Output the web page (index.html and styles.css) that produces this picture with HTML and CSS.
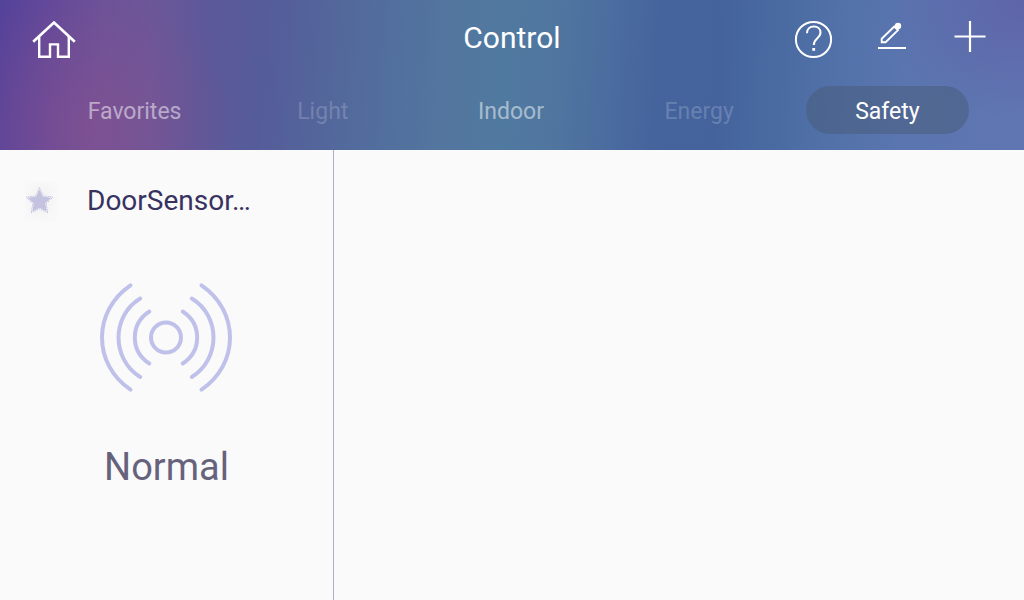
FILE: index.html
```
<!DOCTYPE html>
<html lang="en">
<head>
<meta charset="utf-8">
<meta name="viewport" content="width=device-width, initial-scale=1">
<title>Control</title>
<link rel="stylesheet" href="styles.css">
</head>
<body>
<header class="header">
  <div class="topbar">
    <button class="icon-button" type="button" aria-label="Home">
      <svg width="48" height="48" viewBox="0 0 48 48" fill="none" stroke="#fff" stroke-width="2.400">
        <path d="M3.200 26.800 24 7.500l20.800 19.300" stroke-width="2.700"/>
        <path d="M9.200 22v19.800H20V29.400h8v12.400h10.800V22"/>
      </svg>
    </button>
    <h1 class="title">Control</h1>
    <div class="actions">
      <button class="icon-button" type="button" aria-label="Help">
        <svg width="48" height="48" viewBox="0 0 48 48" fill="none" stroke="#fff">
          <circle cx="23.500" cy="24.500" r="17.600" stroke-width="2"/>
          <path d="M17 18.300c0-4.200 2.900-6.800 6.800-6.800 4 0 6.700 2.500 6.700 6.100 0 2.800-1.400 4.200-3.400 6-2.200 2-3.300 3.200-3.300 6.400" stroke-width="2"/>
          <path d="M23.700 33v2.800" stroke-width="2.800"/>
        </svg>
      </button>
      <button class="icon-button" type="button" aria-label="Edit">
        <svg width="48" height="48" viewBox="0 0 48 48" fill="none" stroke="#fff">
          <path d="M10 33h28" stroke-width="2"/>
          <path d="m26.200 11.500 3.800 3.600L17.600 27.300h-3.900v-3.600z" stroke-width="1.900"/>
          <circle cx="30" cy="11" r="3.200" fill="#fff" stroke="none"/>
        </svg>
      </button>
      <button class="icon-button" type="button" aria-label="Add">
        <svg width="48" height="48" viewBox="0 0 48 48" fill="none" stroke="#fff" stroke-width="2.200">
          <path d="M8.500 21.500h31M24 6v31"/>
        </svg>
      </button>
    </div>
  </div>
  <nav class="tabs" aria-label="Categories">
    <button class="tab" type="button">Favorites</button>
    <button class="tab tab-empty" type="button">Light</button>
    <button class="tab" type="button">Indoor</button>
    <button class="tab tab-empty" type="button">Energy</button>
    <button class="tab tab-active" type="button" aria-current="page">Safety</button>
  </nav>
</header>
<main class="devices">
  <section class="device">
    <div class="device-head">
      <button class="favorite" type="button" aria-label="Add to favorites">
        <svg width="32" height="40" viewBox="0 0 32 40">
          <path d="m14.500 6.500 4 8.300 9.400 1.400-6.700 6.600 1.700 9.200-8.400-4.200-8.400 4.200 1.700-9.200-6.700-6.600 9.400-1.400z" fill="#c3c3df" stroke="#fff" stroke-width="1.600"/>
          <path d="m14.500 6.500 4 8.300 9.400 1.400-6.700 6.600 1.700 9.200-8.400-4.200-8.400 4.200 1.700-9.200-6.700-6.600 9.400-1.400z" fill="none" stroke="#bcbcdb" stroke-width="1" stroke-dasharray="1.500 .7"/>
        </svg>
      </button>
      <h2 class="device-name">DoorSensor…</h2>
    </div>
    <svg class="sensor" width="154" height="130" viewBox="0 0 154 130" fill="none" stroke="#bfc1ea" stroke-width="4" stroke-linecap="round" aria-hidden="true">
      <circle cx="76" cy="66.500" r="15"/>
      <path d="M59.300 40.500C40 53 40 80 59.300 92.500M50.200 27.500C21.300 45 21.300 88 50.200 106M40.500 14.300C2.500 40 2.500 93 40.500 118.700"/>
      <path d="M92.700 40.500C112 53 112 80 92.700 92.500M101.800 27.500C130.700 45 130.700 88 101.800 106M111.500 14.300C149.500 40 149.500 93 111.500 118.700"/>
    </svg>
    <p class="status">Normal</p>
  </section>
</main>
</body>
</html>
```
FILE: styles.css
```
* {
  box-sizing: border-box;
}

body {
  display: flex;
  flex-direction: column;
  min-height: 100vh;
  margin: 0;
  background: #fafafa;
  font-family: Roboto, sans-serif;
}

button {
  padding: 0;
  border: 0;
  background: none;
  color: inherit;
  font: inherit;
  cursor: pointer;
}

svg {
  display: block;
}

.header {
  padding-bottom: 16px;
  background:
    radial-gradient(ellipse 14% 100% at 9% 85%, rgb(140 80 140 / 55%), transparent),
    radial-gradient(ellipse 14% 80% at 100% 0%, rgb(94 88 162 / 60%), transparent),
    linear-gradient(94deg, #54429a 0%, #62499a 5%, #6b5299 10%, #6a5799 15%, #5d5899 20%, #555c9a 26%, #53669b 32%, #526f9e 38%, #53769f 44%, #5079a0 49%, #50769f 54%, #4b6d9f 59%, #45649d 64%, #44639d 70%, #4a6ba2 76%, #5372aa 82%, #5a75af 88%, #6076b2 100%);
  color: #fff;
}

.topbar {
  display: grid;
  grid-template-columns: 1fr auto 1fr;
  align-items: center;
  padding: 15px 30px 23px;
}

.icon-button {
  width: 48px;
  height: 48px;
}

.title {
  margin: 0;
  padding-bottom: 2px;
  font-size: 30px;
  font-weight: 400;
  line-height: 40px;
}

.actions {
  display: flex;
  justify-content: flex-end;
  gap: 30px;
}

.tabs {
  display: grid;
  grid-template-columns: repeat(5, 1fr);
  gap: 25px;
  padding: 0 55px 0 53px;
}

.tab {
  height: 48px;
  padding-top: 4px;
  border-radius: 24px;
  color: rgb(255 255 255 / 50%);
  font-size: 23px;
  line-height: 44px;
}

.tab-empty {
  color: rgb(255 255 255 / 20%);
}

.tab-active {
  background: rgb(72 92 124 / 55%);
  color: #fff;
}

.devices {
  display: grid;
  flex: 1;
  grid-template-columns: repeat(auto-fill, minmax(320px, 334px));
}

.device {
  display: flex;
  flex-direction: column;
  align-items: center;
  padding-top: 31px;
  border-right: 1px solid #b0b0be;
}

.device-head {
  display: flex;
  align-items: center;
  align-self: stretch;
  gap: 30px;
  padding-left: 25px;
}

.favorite {
  width: 32px;
  height: 40px;
  background: radial-gradient(closest-side, #f0f0f2, #f8f8f8);
}

.device-name {
  margin: 0;
  color: #373260;
  font-size: 28px;
  font-weight: 400;
  line-height: 40px;
}

.sensor {
  margin-top: 50px;
}

.status {
  margin: 42px 0 0;
  color: #66627c;
  font-size: 38px;
  line-height: 48px;
}
```
